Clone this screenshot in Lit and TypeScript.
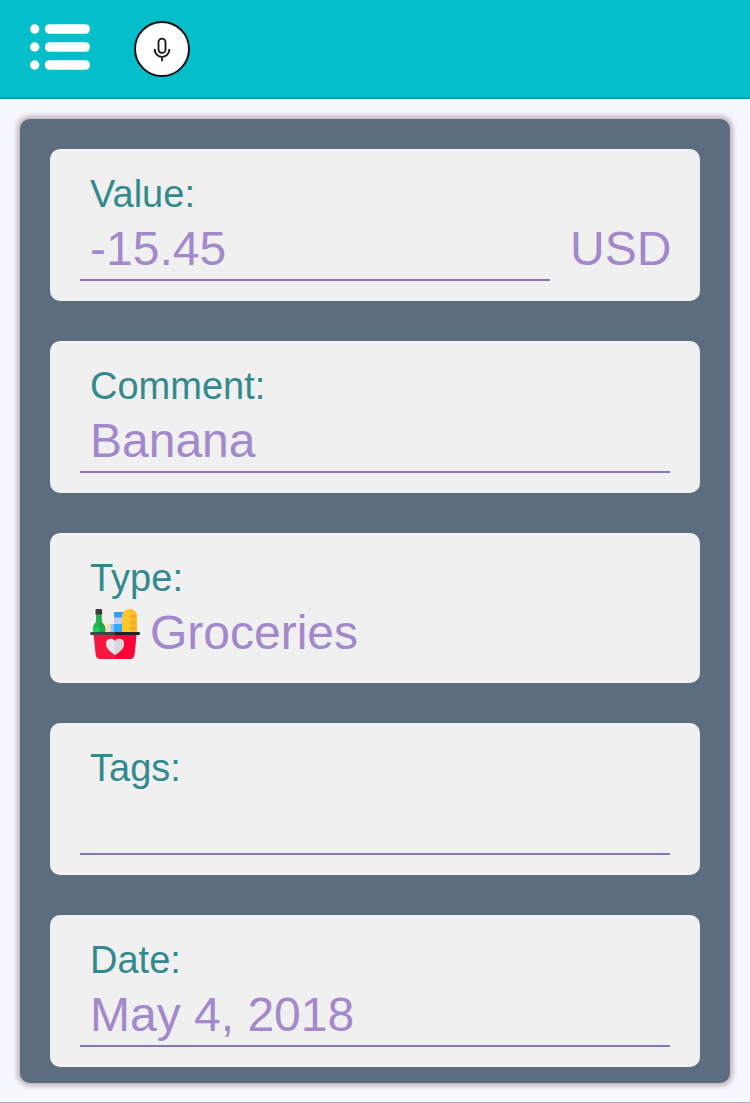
import { LitElement, html, css, svg } from "lit";
import { customElement, property, state } from "lit/decorators.js";

const menuIcon = html`<svg width="60" height="52" viewBox="0 0 60 52" fill="#fff" aria-hidden="true">
  ${[8, 26, 44].map(
    (y) => svg`<circle cx="4.7" cy=${y} r="4.7" /><rect x="14.8" y=${y - 4.8} width="45.2" height="9.6" rx="4.8" />`
  )}
</svg>`;

const micIcon = html`<svg width="20" height="28" viewBox="0 0 20 28" fill="none" stroke="#15151a" stroke-width="1.8" aria-hidden="true">
  <rect x="6.5" y="3.7" width="7" height="14.2" rx="3.5" />
  <path d="M2.8 14v1.2a7.200 6.600 0 0 0 14.400 0V14M10 21.800v4.400" />
</svg>`;

const basketIcon = html`<svg width="50" height="52" viewBox="0 -2 50 52" aria-hidden="true">
  <path fill="#26b34b" d="M6 5h5.600v6.500c0 3 3.700 3.600 3.700 7.500v6H3v-6c0-3.900 3-4.500 3-7.500z" />
  <path fill="#0fd35b" d="M3 18h7v6H3z" />
  <path fill="#178d3f" d="M9 5h2.600v6.500c0 3 3.700 3.600 3.700 7.500v6H9z" opacity=".35" />
  <path fill="#3e3a40" d="M6.700 0h4.200a1.200 1.200 0 0 1 1.200 1.200V5.500H5.500V1.200A1.200 1.200 0 0 1 6.700 0z" />
  <path fill="#fbdcb4" d="M16 15h4v9h-4z" />
  <path fill="#369cf5" d="M24 3h10v6H24z" />
  <path fill="#c3cdf5" d="M24 8.500h10V15H24z" />
  <path fill="#8fc4f4" d="M20.500 15H32v9H20.500z" />
  <path fill="#2da9f7" d="M24 15h9v9h-9z" />
  <path fill="#ffc62e" d="M32 24V7.500A7.500 7.500 0 0 1 39.500 0 7.500 7.500 0 0 1 47 7.500V24z" />
  <path fill="#ffb11c" d="M39.500 0A7.500 7.500 0 0 1 47 7.500V24h-5V3z" opacity=".6" />
  <path fill="#f5a320" d="M39 6.500h7v2h-7zM39 12.500h7v2h-7zM39 18.500h7v2h-7z" />
  <path fill="#f5173f" d="M3.500 25h43l-2.200 20.800A4.700 4.700 0 0 1 39.600 50H10.400a4.700 4.700 0 0 1-4.700-4.200z" />
  <path fill="#ff0038" d="M25 25h21.500l-2.200 20.800A4.700 4.700 0 0 1 39.600 50H25z" />
  <rect fill="#45404a" y="23" width="50" height="3" rx="1.500" />
  <path fill="#25212c" d="M25 23h23.500a1.500 1.500 0 0 1 0 3H25z" />
  <path fill="#e9e6ea" d="M25 46c-5-3.400-9-6.600-9-11.200a4.900 4.900 0 0 1 9-2.800 4.900 4.900 0 0 1 9 2.800c0 4.600-4 7.800-9 11.200z" />
  <path fill="#d5d5db" d="M25 32a4.900 4.900 0 0 1 9 2.800c0 4.600-4 7.800-9 11.200z" />
</svg>`;

@customElement("app-header")
class AppHeader extends LitElement {
  static styles = css`
    :host {
      display: block;
    }
    .bar {
      display: flex;
      align-items: flex-start;
      gap: 44px;
      padding: 21px 30px 20px;
      background: #04bec9;
      border-bottom: 2px solid #0c9fa9;
    }
    button {
      padding: 0;
      border: 0;
      background: none;
      cursor: pointer;
    }
    .menu {
      display: flex;
    }
    .mic {
      box-sizing: border-box;
      display: flex;
      align-items: center;
      justify-content: center;
      width: 56px;
      height: 56px;
      border: 2px solid #111116;
      border-radius: 50%;
      background: #fff;
    }
  `;

  render() {
    return html`<header class="bar">
      <button class="menu" type="button" aria-label="Menu">${menuIcon}</button>
      <button class="mic" type="button" aria-label="Record">${micIcon}</button>
    </header>`;
  }
}

@customElement("record-field")
class RecordField extends LitElement {
  @property() label = "";
  @property() value = "";
  @property() unit = "";
  @property() mode: "text" | "picker" = "text";

  static styles = css`
    :host {
      display: block;
      padding: 20px 30px;
      border-radius: 10px;
      background: #f0f0f0;
    }
    .label {
      display: block;
      padding: 0 10px;
      font-size: 38px;
      line-height: 50px;
      color: #338a8e;
    }
    .row {
      display: flex;
      align-items: flex-start;
    }
    .input,
    .picker,
    .unit {
      box-sizing: border-box;
      margin: 0;
      border: 0;
      border-radius: 0;
      background: none;
      font: inherit;
      font-size: 48px;
      line-height: 60px;
      color: #a388cb;
      outline: none;
    }
    .input {
      flex: 1;
      min-width: 0;
      height: 62px;
      padding: 0 10px 2px;
      border-bottom: 2px solid #8b75b0;
      line-height: 58px;
    }
    .unit {
      flex: none;
      width: 120px;
      height: 60px;
      padding: 0 0 0 20px;
      white-space: nowrap;
      cursor: pointer;
    }
    .picker {
      display: flex;
      align-items: center;
      gap: 10px;
      flex: 1;
      height: 60px;
      padding: 0 10px;
      text-align: left;
      cursor: pointer;
    }
  `;

  private onInput(e: Event) {
    this.value = (e.target as HTMLInputElement).value;
  }

  render() {
    return html`
      <label class="label" for="control">${this.label}:</label>
      <div class="row">
        ${this.mode === "picker"
          ? html`<button class="picker" id="control" type="button">${basketIcon}<span>${this.value}</span></button>`
          : html`<input class="input" id="control" type="text" .value=${this.value} @input=${this.onInput} />`}
        ${this.unit ? html`<button class="unit" type="button">${this.unit}</button>` : null}
      </div>
    `;
  }
}

@customElement("app-root")
class AppRoot extends LitElement {
  @state() private fields = [
    { label: "Value", value: "-15.45", unit: "USD", mode: "text" },
    { label: "Comment", value: "Banana", unit: "", mode: "text" },
    { label: "Type", value: "Groceries", unit: "", mode: "picker" },
    { label: "Tags", value: "", unit: "", mode: "text" },
    { label: "Date", value: "May 4, 2018", unit: "", mode: "text" },
  ];

  static styles = css`
    :host {
      box-sizing: border-box;
      display: block;
      min-height: 100vh;
      border-bottom: 1px solid #adafc0;
      background: #f7f7ff;
      font-family: "Liberation Sans", Arial, Helvetica, sans-serif;
    }
    .page {
      padding: 20px 20px 19px;
    }
    .panel {
      display: flex;
      flex-direction: column;
      gap: 40px;
      padding: 30px 30px 16px;
      border-radius: 10px;
      background: #5c6d80;
      box-shadow: 0 0 5px 3px #c0b2b8;
    }
  `;

  render() {
    return html`
      <app-header></app-header>
      <main class="page">
        <form class="panel" @submit=${(e: Event) => e.preventDefault()}>
          ${this.fields.map(
            (f) => html`<record-field .label=${f.label} .value=${f.value} .unit=${f.unit} .mode=${f.mode}></record-field>`
          )}
        </form>
      </main>
    `;
  }
}
